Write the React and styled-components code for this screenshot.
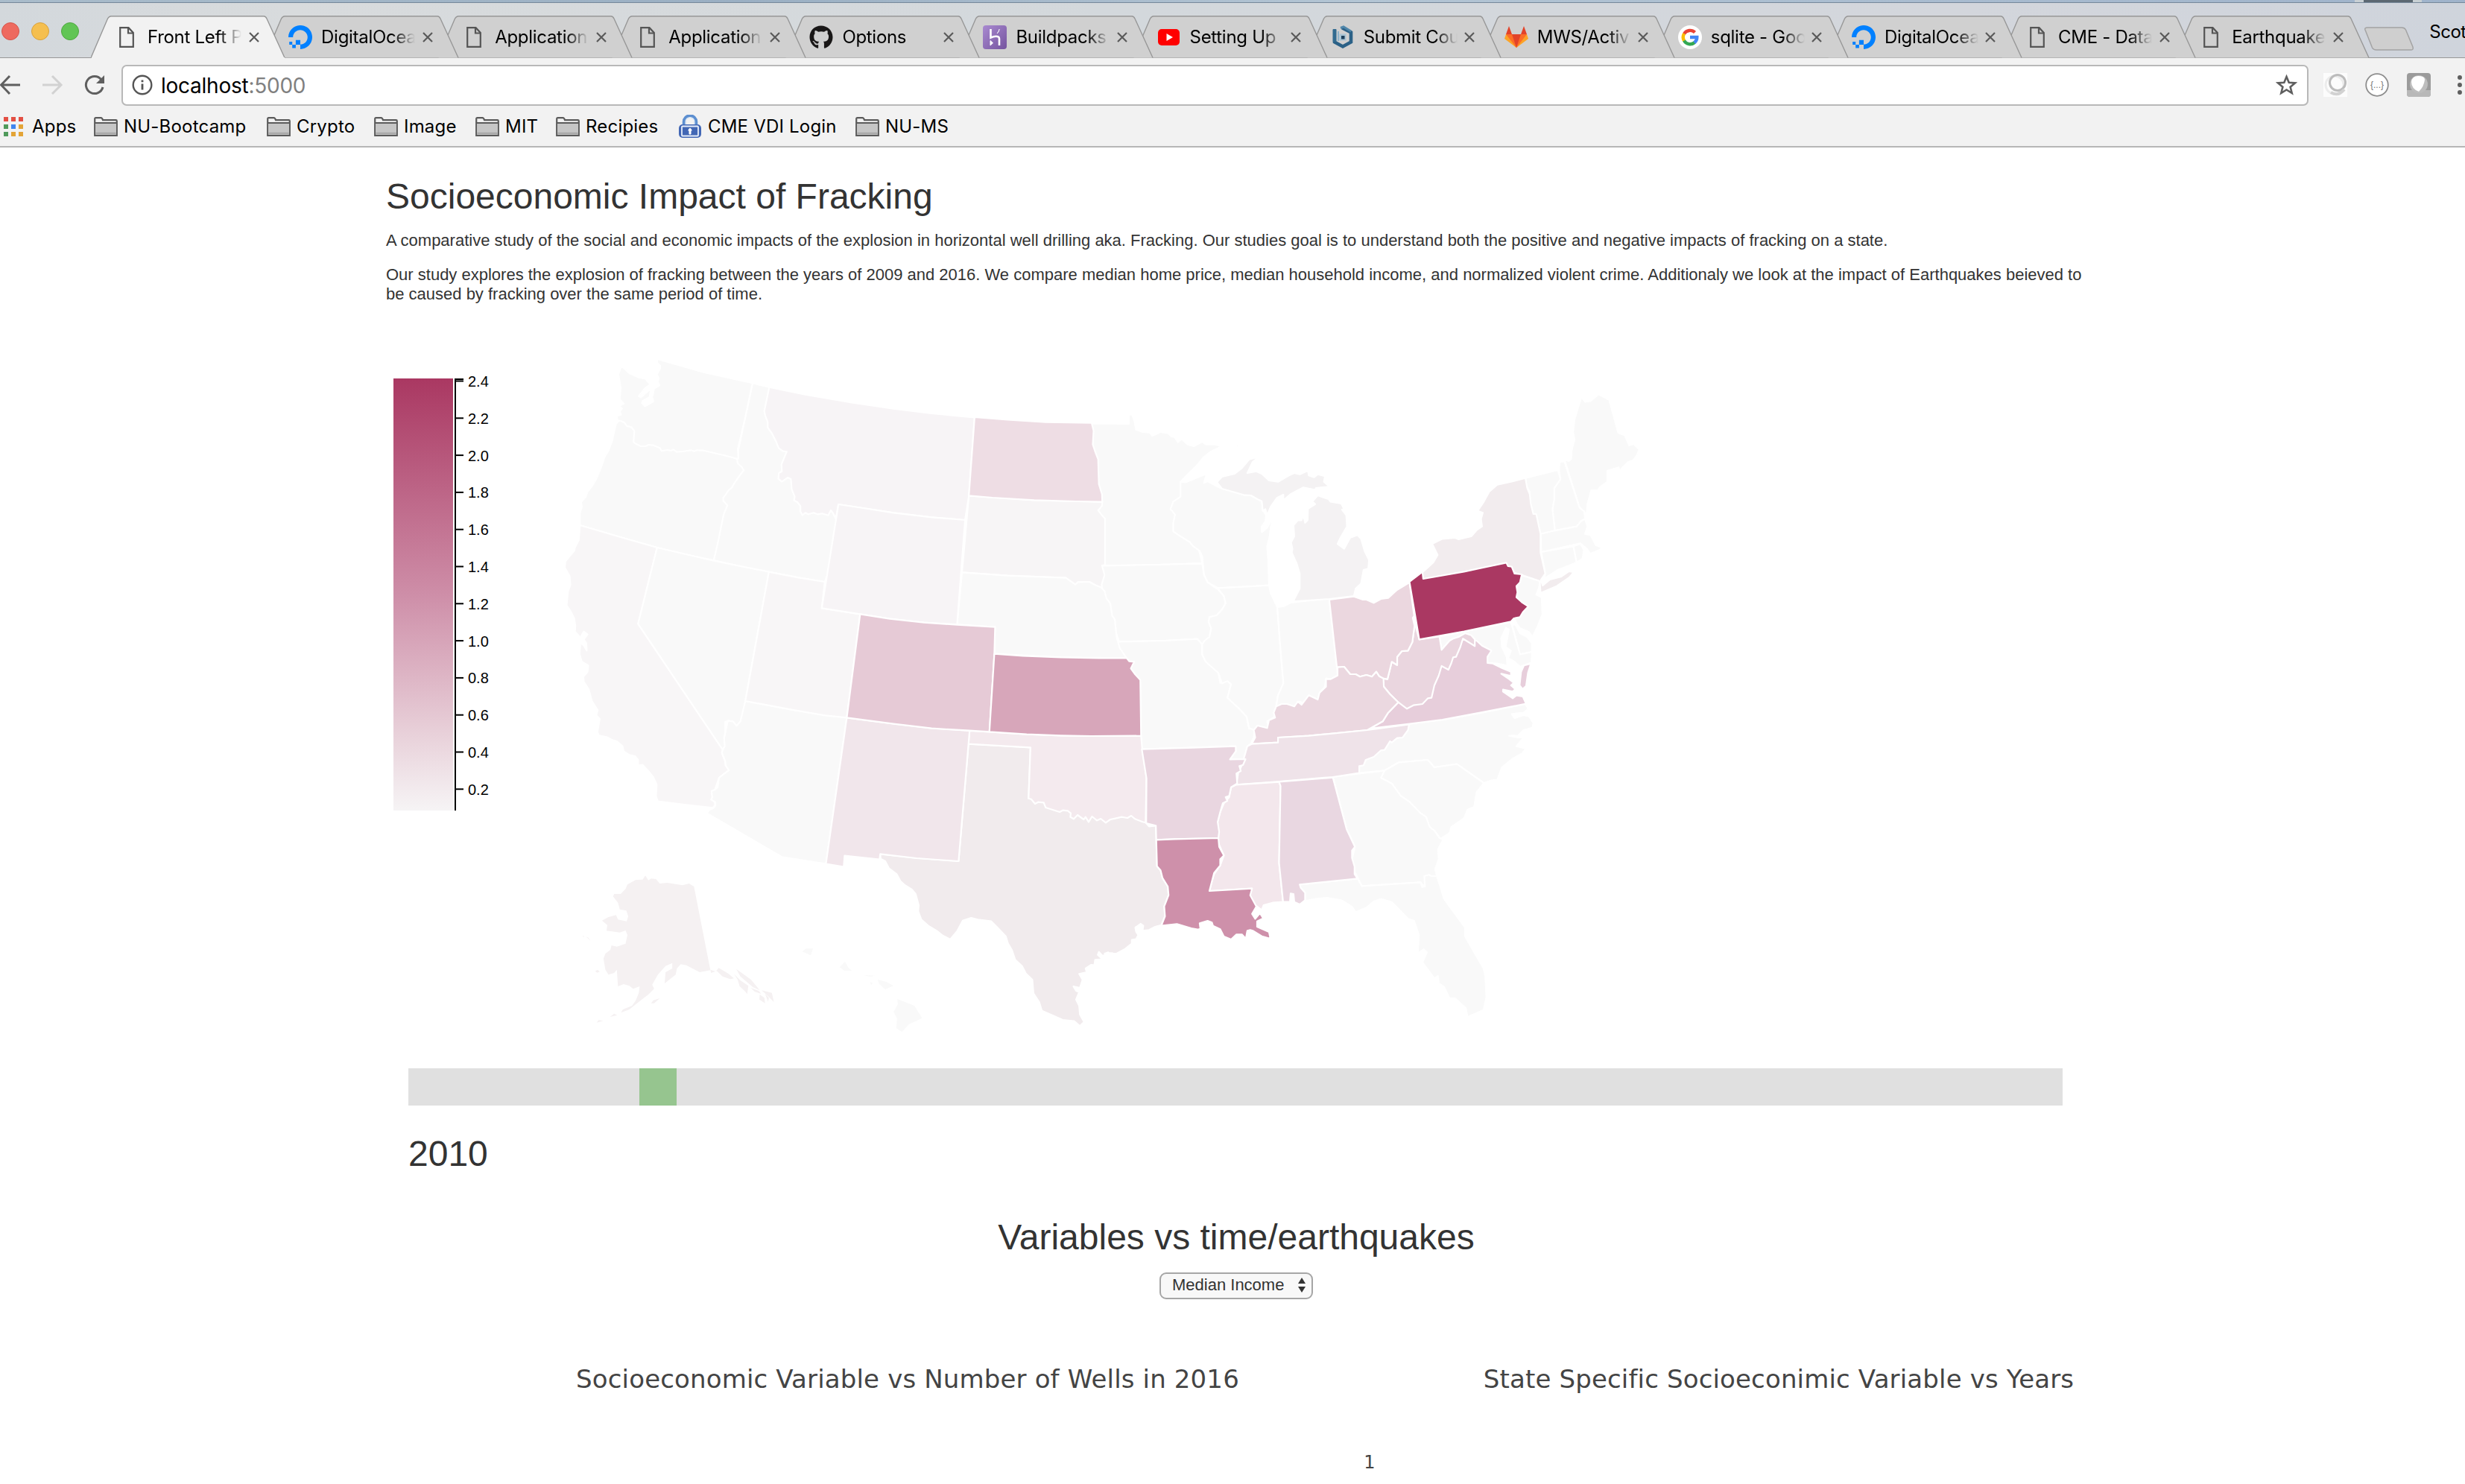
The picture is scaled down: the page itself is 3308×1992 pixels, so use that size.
import React from "react";
import styled, { createGlobalStyle } from "styled-components";
import { FaGithub } from "react-icons/fa";

const GlobalStyle = createGlobalStyle`
  * { box-sizing: border-box; }
  body { margin: 0; background: #fff; overflow: hidden; }
  svg { display: block; flex: none; }
`;

const UI_FONT = '"Inter", "Roboto", "Liberation Sans", sans-serif';
const PAGE_FONT = '"Liberation Sans", Arial, sans-serif';

/* ---------- browser window ---------- */

const Window = styled.div`
  width: 3308px;
  height: 1992px;
  overflow: hidden;
  display: flex;
  flex-direction: column;
  font-family: ${PAGE_FONT};
  color: #333;
`;
const DesktopEdge = styled.div`
  height: 4px;
  flex: none;
  background: linear-gradient(90deg, #a9bccb, #9aafc3 30%, #b3c5d4 55%, #9fb3cb);
  border-bottom: 1px solid #76889a;
  display: flex;
  justify-content: flex-end;
  padding-right: 58px;
`;
const DesktopItem = styled.div`
  width: 90px;
  height: 3px;
  background: #5c6872;
  border: solid #c8d0d4;
  border-width: 0 12px;
`;
const TabStrip = styled.div`
  height: 74px;
  flex: none;
  position: relative;
  background: linear-gradient(90deg, #d3d8dc, #d8dbdd 12%, #d3d8dc 45%, #d3d6dc 80%, #cfd4dc);
  border-bottom: 1px solid #979797;
  display: flex;
  padding-top: 17px;
`;
const Lights = styled.div`
  width: 147px;
  flex: none;
  display: flex;
  gap: 16px;
  padding: 9px 0 0 2px;
`;
const Light = styled.span`
  width: 24px;
  height: 24px;
  border-radius: 50%;
  background: ${(p) => p.$c};
  border: 1px solid ${(p) => p.$b};
`;
const Tab = styled.div`
  width: 233.1px;
  height: 57px;
  flex: none;
  position: relative;
  z-index: ${(p) => p.$z};
  display: flex;
  align-items: center;
  font: 24px/30px ${UI_FONT};
  color: #000;
`;
const TabShape = styled.svg`
  position: absolute;
  left: -25px;
  top: 0;
  z-index: -1;
`;
const TabIcon = styled.span`
  width: 46px;
  height: 34px;
  flex: none;
  display: flex;
  align-items: center;
  justify-content: center;
`;
const TabTitle = styled.span`
  width: 126px;
  margin-left: 5px;
  flex: none;
  overflow: hidden;
  white-space: nowrap;
  letter-spacing: -0.3px;
  mask-image: linear-gradient(90deg, #000 ${(p) => (p.$short ? 100 : 76)}%, transparent);
`;
const TabClose = styled.svg`
  margin-left: 9.500px;
`;
const NewTab = styled.svg`
  margin: 15px 0 0 -4px;
`;
const Profile = styled.span`
  margin: 7px 0 0 19px;
  font: 24px/30px ${UI_FONT};
  letter-spacing: -0.45px;
  color: #000;
  white-space: nowrap;
`;
const Toolbar = styled.div`
  height: 72px;
  flex: none;
  background: #f2f2f2;
  display: flex;
  align-items: center;
`;
const NavIcons = styled.svg`
  width: 163px;
`;
const Omnibox = styled.div`
  width: 2935px;
  height: 55px;
  border: 2px solid #b8b8b8;
  border-radius: 7px;
  background: #fff;
  display: flex;
  align-items: center;
  padding: 0 13px 0 12px;
  font: 28px/36px ${UI_FONT};
  color: #000;
`;
const Url = styled.span`
  flex: 1;
  margin: 2px 0 0 11px;
  letter-spacing: -0.25px;
  span { color: #808080; }
`;
const Extensions = styled.div`
  display: flex;
  align-items: center;
  gap: 24px;
  margin-left: 20px;
`;
const Menu = styled.svg`
  margin-left: 10px;
`;
const Bookmarks = styled.div`
  height: 48px;
  flex: none;
  background: #f2f2f2;
  border-bottom: 2px solid #b6b6b6;
  display: flex;
  padding-left: 5px;
`;
const Bookmark = styled.div`
  width: ${(p) => p.$w}px;
  flex: none;
  display: flex;
  align-items: center;
  gap: ${(p) => p.$gap || 8}px;
  padding-bottom: 6px;
  font: 24px/30px ${UI_FONT};
  letter-spacing: 0.2px;
  color: #000;
  white-space: nowrap;
`;

/* ---------- page ---------- */

const Page = styled.main`
  width: 2282px;
  margin-left: 518px;
  display: flex;
  flex-direction: column;
`;
const Heading = styled.h2`
  margin: ${(p) => p.$m};
  font: 400 48px/53px ${PAGE_FONT};
  text-align: ${(p) => p.$align || "left"};
`;
const Paragraph = styled.p`
  margin: 0 0 20px;
  font: 22px/26px ${PAGE_FONT};
`;
const MapRow = styled.div`
  display: flex;
  height: 930px;
  margin-top: 42px;
`;
const Slider = styled.div`
  width: 2220px;
  height: 50px;
  margin: 34px 0 0 30px;
  padding-left: 310px;
  background: #e0e0e0;
`;
const SliderHandle = styled.div`
  width: 50px;
  height: 50px;
  background: #96c58f;
`;
const SelectBox = styled.div`
  width: 206px;
  height: 36px;
  margin: 21px auto 0;
  border: 2px solid #a6a6a6;
  border-radius: 9px;
  background: #f8f8f8;
  display: flex;
  align-items: center;
  justify-content: space-between;
  padding: 0 7px 3px 15px;
  font: 22px/26px ${PAGE_FONT};
`;
const Plots = styled.div`
  display: flex;
  margin-top: 85px;
  font-family: "DejaVu Sans", Verdana, sans-serif;
  color: #444;
`;
const PlotTitle = styled.div`
  width: ${(p) => p.$w}px;
  flex: none;
  font-size: 34px;
  line-height: 44px;
  letter-spacing: 0.15px;
  text-align: center;
  white-space: nowrap;
`;
const AxisLabel = styled.div`
  margin: 75px 0 0 1311px;
  width: 18px;
  text-align: center;
  font: 24px/30px "DejaVu Sans", Verdana, sans-serif;
  color: #444;
`;

/* ---------- icons ---------- */

const FileIcon = () => (
  <svg width="20" height="28" viewBox="0 0 20 28" fill="none" stroke="#555" strokeWidth="2.2">
    <path d="M1.2 1.2H12.5L18.8 8V26.8H1.2Z" />
    <path d="M12 1.5V8.5H18.6" />
  </svg>
);
const DigitalOcean = () => (
  <svg width="32" height="32" viewBox="0 0 32 32" fill="#0080ff">
    <path d="M16 32V25.8C22.6 25.8 27.600 19.300 25.100 12.400C24.200 9.900 22.100 7.800 19.600 6.900C12.700 4.400 6.200 9.400 6.200 16H0C0 5.500 10.100 -2.700 21.100 .8C25.900 2.300 29.700 6.100 31.200 10.900C34.700 21.900 26.500 32 16 32Z" />
    <path d="M9.900 19.800H16V25.900H9.900ZM5.200 25.900H9.900V30.600H5.200ZM1.200 22H5.200V25.900H1.200Z" />
  </svg>
);
const Heroku = () => (
  <svg width="32" height="32" viewBox="0 0 32 32">
    <defs>
      <linearGradient id="heroku" x2="1" y2="1">
        <stop stopColor="#a98ad0" />
        <stop offset="1" stopColor="#75549f" />
      </linearGradient>
    </defs>
    <rect width="32" height="32" rx="4" fill="url(#heroku)" />
    <path d="M10.500 5V16.500C14 15 22 13 22 18V27" fill="none" stroke="#fff" strokeWidth="2.600" />
    <path d="M10 20.500L13.500 23.700L10 27ZM19 11Q21.800 8.500 22.200 5" fill="#fff" stroke="#fff" />
  </svg>
);
const YouTube = () => (
  <svg width="29" height="22" viewBox="0 0 29 22">
    <rect width="29" height="22" rx="5" fill="#f00" />
    <path d="M11.500 6L20 11L11.500 16Z" fill="#fff" />
  </svg>
);
const Hexagon = () => (
  <svg width="28" height="32" viewBox="0 0 28 32" fill="none">
    <path d="M3 6V22.500L14 28.500L25 22.500V9.500L13 3.200" stroke="#2b6187" strokeWidth="4.600" />
    <path d="M3 5V22" stroke="#326b90" strokeWidth="4.600" />
    <path d="M11 3.500L15 2L25 8" stroke="#4f86aa" strokeWidth="3" />
    <path d="M8 8V21" stroke="#8fb2c8" strokeWidth="2" />
    <rect x="9.500" y="11.500" width="9" height="9" fill="#a9c4d4" />
    <rect x="12" y="14" width="4.500" height="4.500" fill="#1d3f5c" />
  </svg>
);
const GitLab = () => (
  <svg width="32" height="29" viewBox="0 0 32 29">
    <path d="M0 17L2 11H30L32 17L16 29Z" fill="#fca326" />
    <path d="M16 29L2 11H30Z" fill="#fc6d26" />
    <path d="M16 29L10 11H22ZM2 11L6 0L10 11ZM30 11L26 0L22 11Z" fill="#e24329" />
  </svg>
);
const Google = () => (
  <svg width="32" height="32" viewBox="0 0 32 32" fill="none">
    <circle cx="16" cy="16" r="16" fill="#fff" />
    <g strokeWidth="4.400">
      <path d="M22.500 9.500A9.300 9.300 0 0 0 8 11.500" stroke="#ea4335" />
      <path d="M8.200 11.100A9.300 9.300 0 0 0 8.200 20.900" stroke="#fbbc05" />
      <path d="M8 20.500A9.300 9.300 0 0 0 22.200 23" stroke="#34a853" />
      <path d="M16 16H25.300A9.300 9.300 0 0 1 21.800 23.300" stroke="#4285f4" />
    </g>
  </svg>
);
const Folder = () => (
  <svg width="32" height="26" viewBox="0 0 32 26">
    <path d="M1.200 24.800V2.500Q1.200 1.200 2.500 1.200H9.500Q11 1.200 12 4.200H29.500Q30.800 4.200 30.800 5.500V24.800Z" fill="#f2f2f2" stroke="#5b5b5b" strokeWidth="2.200" />
    <rect x="2.400" y="9" width="27.200" height="14.700" fill="#c6c6c6" />
    <path d="M2 8H30" stroke="#5b5b5b" strokeWidth="2" />
    <path d="M2.400 22H29.600" stroke="#a9a9a9" strokeWidth="2.600" />
  </svg>
);
const Lock = () => (
  <svg width="32" height="32" viewBox="0 0 32 32">
    <path d="M8 15V9.500A8 8 0 0 1 24 9.500V15" fill="none" stroke="#5d8fd0" strokeWidth="4.500" />
    <path d="M10 14V9.500A6 6 0 0 1 22 9.500V14" fill="none" stroke="#dce9f7" strokeWidth="1.200" />
    <rect x="1" y="13" width="30" height="18" rx="5" fill="#4267b5" />
    <rect x="5" y="15.500" width="22" height="13" rx="1" fill="none" stroke="#e8effa" strokeWidth="1.800" />
    <path d="M16 18.500A2.200 2.200 0 0 1 17 22.500V26H15V22.500A2.200 2.200 0 0 1 16 18.500Z" fill="#fff" stroke="#fff" />
  </svg>
);
const AppsGrid = () => {
  const colors = ["#e34f43", "#e34f43", "#e34f43", "#4f9a5b", "#3f85ee", "#e3a436", "#4f9a5b", "#e3a436", "#e3a436"];
  return (
    <svg width="26" height="26" viewBox="0 0 26 26">
      {colors.map((c, i) => (
        <rect key={i} x={(i % 3) * 10} y={Math.floor(i / 3) * 10} width="6" height="6" fill={c} />
      ))}
    </svg>
  );
};

const TABS = [
  [FileIcon, "Front Left P"],
  [DigitalOcean, "DigitalOcea"],
  [FileIcon, "Application"],
  [FileIcon, "Application"],
  [() => <FaGithub size={32} color="#191717" />, "Options"],
  [Heroku, "Buildpacks"],
  [YouTube, "Setting Up"],
  [Hexagon, "Submit Cou"],
  [GitLab, "MWS/Activ"],
  [Google, "sqlite - Goo"],
  [DigitalOcean, "DigitalOcea"],
  [FileIcon, "CME - Data"],
  [FileIcon, "Earthquake"],
];

const BOOKMARKS = [
  [AppsGrid, "Apps", 121, 12],
  [Folder, "NU-Bootcamp", 232],
  [Folder, "Crypto", 144],
  [Folder, "Image", 136],
  [Folder, "MIT", 108],
  [Folder, "Recipies", 164],
  [Lock, "CME VDI Login", 238],
  [Folder, "NU-MS", 130],
];

/* ---------- map ---------- */

// The outlines are digitised on four sheets; each has its origin and scale.
const SHEETS = {
  A: [740, 470, 1.96],
  B: [740, 900, 1.96],
  C: [1480, 520, 2.0632],
  D: [1480, 940, 2.0632],
};

// Turns "A x y x y B x y" into path data; "/" starts a new polygon.
function outline(text) {
  let sheet = SHEETS.A;
  return text
    .split("/")
    .map((part) => {
      const points = [];
      const tokens = part.trim().split(/[\s,]+/);
      for (let i = 0; i < tokens.length; ) {
        if (SHEETS[tokens[i]]) {
          sheet = SHEETS[tokens[i]];
          i += 1;
        } else {
          const x = sheet[0] + tokens[i] / sheet[2];
          const y = sheet[1] + tokens[i + 1] / 3;
          points.push(`${x.toFixed(1)} ${y.toFixed(1)}`);
          i += 2;
        }
      }
      return `M${points.join("L")}Z`;
    })
    .join("");
}

const NONE = "#f9f9f9";

// Later states are painted over earlier ones.
const STATES = [
  ["ID", NONE, "A 529,133 573,149 640,400 760,640 780,700 719,933 650,916 572,893 500,873 427,846 400,600 400,437 488,437 492,430 492,400"],
  ["OR", NONE, "A 170,297 166,320 160,365 150,405 140,430 130,475 118,518 108,545 95,570 90,592 78,612 80,632 75,655 75,705 180,752 278,795 350,822 427,846 440,760 453,662 463,625 452,607 452,595 467,562 475,553 480,538 495,505 506,484 500,470 490,455 488,437 400,380 230,300 200,288 180,280"],
  ["WA", NONE, "A 278,36 400,89 529,133 510,270 490,400 492,437 488,437 455,424 400,404 383,403 375,407 367,403 345,408 330,410 320,400 315,405 305,402 290,406 285,394 268,383 255,381 248,387 235,387 222,377 216,371 218,325 210,310 198,305 192,292 182,285 174,283 172,265 183,260 180,245 186,235 178,225 190,215 180,198 182,150 176,97 184,64 205,93 230,110 247,115 260,138 245,155 230,185 235,190 262,155 258,190 240,205 238,212 246,226 268,207 265,190 270,155 284,142 280,128 282,112 277,97 286,75 286,62 278,50"],
  ["CA", "#f8f6f7", "A 75,705 180,752 278,795 228,1102 B 450,318 450,340 457,365 458,382 467,402 455,415 441,432 430,480 421,495 431,540 425,553 350,540 280,527 275,507 277,460 268,430 255,405 240,380 228,382 228,360 220,345 205,340 190,325 187,305 172,285 160,280 145,268 125,262 121,248 127,195 118,180 122,160 107,125 98,75 85,45 84,25 95,5 A 97,1270 80,1255 74,1225 76,1180 84,1187 93,1210 92,1180 85,1165 95,1145 85,1133 76,1157 62,1133 63,1110 60,1080 50,1050 40,1028 44,970 50,945 48,910 35,875 37,850 60,808 62,795 72,765"],
  ["AZ", NONE, "B 510,123 640,160 777,190 722,779 606,751 409,575 415,562 425,555 431,545 431,530 420,520 423,510 421,485 430,480 437,470 441,432 455,415 467,402 458,382 457,365 448,330 455,305 454,275 470,160"],
  ["NV", NONE, "A 278,795 427,848 572,893 B 510,123 497,205 487,223 478,205 465,202 457,207 457,250 454,270 456,305 450,318 A 228,1102"],
  ["UT", "#f8f6f7", "A 572,893 650,916 719,933 711,1039 812,1063 B 777,190 720,181 640,160 510,123"],
  ["MN", NONE, "A 1410,295 1518,297 C 72,147 72,108 82,112 88,140 92,170 110,180 130,182 137,195 160,180 182,185 190,198 198,200 208,220 218,208 235,230 252,237 275,218 285,230 310,230 330,237 300,258 280,280 260,315 235,350 215,380 240,500 275,708 150,714 0,718 A 1420,860"],
  ["WI", NONE, "C 215,380 230,382 287,348 280,385 290,378 318,400 330,408 380,425 390,433 410,435 428,450 440,458 443,495 452,515 450,540 440,560 440,583 455,565 463,545 475,520 465,560 462,600 455,640 458,700 460,797 400,802 318,808 290,785 280,755 275,680 268,658 250,640 240,622 215,600 195,580 195,545 200,512 187,490 195,460 215,440"],
  ["IA", NONE, "A 1448,867 C 0,718 150,714 275,709 280,755 290,785 305,800 318,812 335,840 340,870 330,895 315,918 295,925 293,945 300,970 295,1005 282,1020 275,1035 262,1013 170,1020 45,1024 20,920 A 1445,945"],
  ["MO", NONE, "C 45,1024 170,1020 262,1013 275,1035 275,1075 285,1105 320,1150 325,1190 345,1183 355,1195 345,1250 375,1290 398,1325 405,1375 D 405,112 420,120 418,150 410,175 400,185 392,237 352,238 368,205 362,185 250,190 108,197 90,140 C 90,1178 20,1150 38,1050"],
  ["IL", NONE, "C 318,808 400,802 460,797 465,830 475,860 483,885 490,1020 495,1110 500,1190 490,1230 485,1240 480,1285 473,1310 477,1325 455,1345 458,1370 D 455,112 430,102 420,120 405,112 C 398,1325 375,1290 345,1250 355,1195 345,1183 330,1192 320,1150 285,1105 275,1075 275,1035 282,1020 295,1005 300,970 293,945 295,925 315,918 330,895 340,870 335,840"],
  ["IN", NONE, "C 483,885 500,882 520,867 627,850 635,960 648,1120 650,1160 630,1175 618,1172 615,1205 600,1230 595,1257 570,1240 560,1275 545,1265 530,1285 510,1275 480,1285 485,1240 500,1190 495,1110 490,1020"],
  ["MI", "#f4f2f3", "C 527,862 545,810 545,750 537,710 523,665 525,650 521,625 530,600 528,555 540,535 550,535 555,512 560,545 567,535 568,488 588,470 580,460 595,435 625,450 630,460 660,468 668,490 662,492 674,515 676,560 658,605 650,630 668,650 685,605 705,595 715,610 725,660 737,695 735,730 722,735 715,790 700,810 695,840 627,852 / 316,382 330,360 365,348 385,325 405,290 432,280 415,300 400,345 425,338 440,348 460,375 485,380 515,355 530,345 545,350 568,335 570,355 585,362 595,350 615,358 612,380 628,400 590,405 588,413 555,403 520,430 500,455 500,432 482,445 465,480 455,515 450,490 443,498 440,458 428,450 410,435 390,433 330,408 / 362,240 388,217 375,238"],
  ["ME", NONE, "C 1278,290 1290,297 1297,288 1298,255 1306,210 1302,180 1306,130 1325,38 1335,58 1350,55 1372,28 1402,50 1427,183 1445,193 1457,233 1470,228 1485,250 1478,275 1467,295 1455,300 1440,320 1432,338 1428,322 1410,330 1397,335 1397,380 1378,400 1370,415 1352,415 1342,470 1340,500 1333,520 1333,500 1320,485"],
  ["NH", NONE, "C 1265,300 1278,298 1320,485 1333,500 1335,530 1325,537 1312,560 1250,577 1245,490 1250,405 1267,370 1263,333"],
  ["VT", NONE, "C 1170,365 1260,333 1267,370 1250,405 1250,450 1245,490 1252,577 1212,590 1200,515 1192,510 1182,460 1182,420 1172,395"],
  ["MA", NONE, "C 1212,590 1250,577 1312,560 1325,537 1335,530 1342,560 1335,590 1350,595 1365,635 1380,645 1400,628 1375,655 1350,670 1340,650 1322,628 1214,663"],
  ["CT", NONE, "C 1214,663 1303,640 1312,705 1260,735 1222,770 1225,750"],
  ["RI", NONE, "C 1303,640 1322,630 1332,655 1328,690 1312,705"],
  ["NJ", NONE, "C 1155,755 1210,780 1208,805 1200,835 1215,845 1217,915 1203,965 1190,1005 1180,985 1155,970 1145,950 1140,930 1155,890 1140,845"],
  ["NY", "#f2ecee", "C 885,775 885,745 915,705 927,675 912,630 940,610 975,606 985,612 1020,600 1035,575 1050,560 1047,530 1052,505 1038,497 1055,460 1070,420 1092,392 1130,380 1170,365 1175,405 1182,430 1185,470 1192,510 1200,510 1212,590 1212,665 1225,750 1213,775 1218,798 1238,774 1268,763 1290,741 1304,744 1292,765 1257,800 1212,828 1210,780 1160,755 1100,730"],
  ["DE", NONE, "C 1133,955 1142,955 1155,990 1175,1005 1188,1030 1188,1065 1155,1075"],
  ["MD", NONE, "C 932,1003 1130,945 1155,1075 1188,1065 1187,1108 1155,1125 1140,1105 1122,1090 1130,1060 1115,1045 1120,1010 1124,975 1116,968 1103,1010 1105,1045 1118,1085 1120,1120 1090,1112 1068,1110 1020,1000 985,1005 960,1020 938,1057"],
  ["NC", NONE, "D 780,105 940,79 1050,50 1170,15 1178,35 1165,50 1132,55 1140,72 1165,60 1180,65 1192,90 1190,110 1165,120 1150,142 1125,143 1150,150 1165,150 1145,185 1172,195 1160,215 1135,235 1105,270 1092,320 1075,323 1055,333 980,257 918,270 900,240 820,250 780,283 710,293 700,200"],
  ["SC", NONE, "D 780,283 820,250 900,240 918,270 980,257 1055,333 1035,370 1028,430 1010,440 1000,475 965,510 960,535 935,558 918,525 905,510 895,470 880,455 850,410 825,385 800,335 770,312"],
  ["GA", NONE, "D 637,309 710,295 780,283 770,312 800,335 825,385 850,410 880,455 895,470 905,510 918,525 932,555 942,560 928,600 930,640 920,680 925,708 900,715 888,750 880,733 717,748 697,690 690,640 698,590 675,520"],
  ["FL", NONE, "D 545,742 705,718 717,748 880,733 884,752 892,750 890,708 903,703 910,708 925,708 945,800 1003,915 1003,950 1030,1020 1054,1080 1059,1110 1062,1195 1054,1247 1010,1276 1005,1240 975,1200 960,1200 945,1155 930,1140 928,1110 918,1120 885,1055 897,1015 888,1003 872,1020 875,945 862,888 845,880 815,835 800,812 770,800 750,810 730,835 700,853 690,832 660,805 620,795 590,800 560,808 560,775 545,755"],
  ["VA", "#e7cedb", "C 735,1378 745,1373 850,1355 940,1338 1050,1308 1172,1274 1163,1245 1145,1240 1135,1252 1108,1225 1108,1217 1135,1225 1142,1215 1130,1200 1138,1190 1125,1175 1103,1153 1130,1162 1130,1145 1105,1130 1080,1112 1065,1110 1065,1085 1076,1060 1050,1040 1035,1020 997,1015 900,1150 818,1268 790,1310 775,1345 / 1185,1113 1177,1150 1172,1202 1162,1215 1154,1200 1158,1145 1166,1120"],
  ["WV", "#ead6df", "C 858,920 876,1015 932,1003 938,1057 960,1020 970,1012 985,1005 1003,990 1020,998 1030,1015 1030,1042 997,1012 990,1045 978,1085 970,1087 965,1110 957,1137 938,1122 930,1160 918,1200 910,1250 900,1252 885,1275 860,1280 842,1294 818,1268 795,1235 778,1205 775,1172 788,1175 795,1135 800,1105 815,1118 815,1085 828,1062 845,1060 857,1025 863,960"],
  ["OH", "#ebd7df", "C 627,855 695,842 720,855 730,855 750,868 770,852 790,848 815,815 849,785 862,920 858,928 863,960 857,1025 845,1060 828,1062 815,1085 815,1118 800,1105 795,1135 788,1175 775,1172 765,1163 757,1145 745,1165 730,1158 712,1165 700,1155 685,1155 668,1125 648,1127"],
  ["KY", "#ebd8e0", "C 650,1127 668,1125 685,1155 700,1155 712,1165 730,1158 745,1165 757,1145 765,1163 777,1172 778,1205 795,1235 818,1268 790,1310 775,1345 735,1378 D 732,120 570,143 485,150 485,170 412,176 422,150 418,120 428,102 455,112 460,80 477,70 473,50 C 480,1285 495,1275 510,1275 530,1285 540,1265 550,1278 570,1240 595,1257 600,1230 618,1205 618,1175 630,1175 650,1160"],
  ["PA", "#aa3862", "C 885,743 887,771 1000,742 1117,706 1122,720 1132,722 1140,750 1160,753 1155,785 1145,800 1148,825 1145,845 1160,865 1178,882 1163,905 1155,925 1138,930 1130,943 1000,983 876,1015 849,783"],
  ["TN", "#efe3e9", "D 412,176 485,170 485,150 570,143 732,120 848,97 845,120 830,150 815,152 800,170 795,165 780,200 770,202 750,228 728,240 722,262 710,265 710,293 637,309 488,327 370,340 375,290 385,262 400,185"],
  ["MS", "#f3e7ec", "D 370,340 488,329 492,345 488,655 499,812 470,815 445,825 440,845 400,800 413,758 295,768 300,740 308,700 325,665 335,625 320,575 318,490 325,450 335,415 350,390 355,350"],
  ["AL", "#e9d7e1", "D 488,328 637,311 675,520 698,590 690,605 690,635 697,670 697,700 705,718 545,742 548,755 560,775 560,805 545,822 530,812 528,780 520,778 518,812 499,812 488,655 492,345"],
  ["TX", "#f1ebed", "B 1097,296 1260,310 1255,515 1400,560 1540,570 D 120,495 128,508 147,505 148,562 150,668 160,685 165,715 180,750 182,785 170,830 172,870 162,905 145,912 128,925 110,928 112,908 105,900 90,915 92,932 98,945 92,962 80,965 80,980 60,1003 35,1022 25,1018 20,1025 15,1015 5,1020 B 1485,1140 1465,1137 1450,1150 1440,1133 1437,1145 1450,1163 1430,1165 1428,1187 1420,1185 1405,1200 1408,1215 1388,1222 1397,1245 1390,1278 1373,1272 1380,1290 1388,1295 1380,1325 1388,1350 1390,1385 1401,1415 1390,1432 1375,1412 1345,1407 1315,1387 1290,1370 1283,1335 1268,1300 1265,1245 1248,1220 1238,1190 1220,1165 1211,1125 1201,1100 1195,1070 1173,1035 1157,1010 1125,1004 1104,996 1082,1007 1067,1050 1049,1083 1030,1068 1015,1050 993,1030 973,1003 965,970 966,945 958,900 948,882 930,865 918,848 908,820 888,797 878,768 866,758 865,739 960,755 1071,768"],
  ["OK", "#f4eaee", "B 1100,243 1152,247 1250,257 1340,262 1420,264 1551,263 1554,318 1565,430 1563,613 1555,610 1535,598 1525,585 1515,594 1500,590 1485,595 1470,600 1458,613 1445,597 1435,604 1422,588 1413,610 1405,590 1400,600 1384,582 1374,598 1365,590 1366,575 1358,565 1345,563 1337,570 1320,562 1300,552 1295,532 1280,530 1272,537 1262,518 1255,515 1260,310 1180,303 1097,296"],
  ["NM", "#f1e6eb", "B 777,190 900,214 1000,232 1100,243 1097,296 1071,768 960,756 865,739 863,761 771,746 769,791 722,779"],
  ["SD", "#f7f5f6", "A 1098,586 1270,604 1449,611 1448,628 1438,645 1448,665 1456,678 1456,865 1448,867 1455,905 1447,945 1450,965 1430,946 1415,933 1385,934 1378,944 1353,917 1200,908 1080,895"],
  ["NE", NONE, "A 1080,895 1200,908 1353,917 1378,944 1385,934 1415,933 1430,946 1445,955 1455,970 1460,1000 1470,1020 1475,1070 1482,1085 1487,1160 1495,1200 1513,1240 1340,1237 1165,1223 1167,1115 1067,1105"],
  ["MT", "#f7f4f6", "A 573,149 665,178 790,211 900,236 1000,255 1113,271 1098,588 1088,684 1000,673 900,655 820,636 755,621 748,678 740,655 735,645 728,665 712,658 700,661 690,655 675,661 668,655 660,664 655,650 655,628 647,612 638,605 640,590 632,560 630,520 622,513 606,530 597,518 598,495 606,488 605,460 613,430 619,409 609,407 598,395 590,365 580,335 569,312 569,290 562,262 560,245"],
  ["WY", "#f7f4f6", "A 755,621 820,636 900,655 1000,673 1088,684 1067,1105 980,1097 890,1082 812,1063 711,1039"],
  ["ND", "#eedde4", "A 1113,270 1200,280 1300,290 1421,293 1426,325 1424,380 1430,408 1438,440 1440,540 1448,580 1449,611 1380,609 1270,604 1160,594 1098,586"],
  ["CO", "#e6cad6", "A 812,1063 890,1082 980,1097 1067,1106 1167,1115 1165,1223 B 1152,247 1100,242 1000,233 900,215 777,190"],
  ["KS", "#d7a6ba", "A 1165,1223 1240,1231 1340,1237 1440,1240 1513,1240 1520,1253 1533,1255 1524,1282 1535,1305 1549,1328 B 1551,263 1420,264 1340,262 1250,257 1152,247"],
  ["AR", "#e9d6e0", "D 108,197 250,191 368,185 368,205 352,238 395,237 388,260 378,265 382,285 370,295 372,335 355,350 350,385 340,390 345,405 332,415 325,450 318,490 322,530 320,555 200,559 148,562 147,505 120,495 121,315"],
  ["LA", "#ce90aa", "D 148,562 200,559 320,555 322,590 335,625 325,640 325,665 308,695 300,740 295,768 413,758 408,785 425,830 413,860 422,880 435,857 444,878 427,890 427,912 460,933 464,960 440,950 415,928 408,925 400,928 396,960 385,943 370,943 355,963 335,951 325,922 305,908 302,895 290,888 268,898 270,920 262,923 245,918 205,901 162,908 172,870 170,830 182,785 180,750 165,715 160,685 150,668"],
  ["AK", "#f5f1f2", "B 247,826 255,845 262,838 275,840 285,858 305,855 345,865 362,858 375,870 418,1207 390,1215 375,1203 355,1187 340,1183 330,1200 327,1225 298,1260 300,1215 318,1200 318,1178 300,1190 280,1225 265,1265 270,1282 255,1305 235,1328 205,1365 183,1378 188,1365 212,1350 222,1328 230,1298 232,1272 215,1282 205,1270 190,1263 175,1272 172,1205 165,1218 150,1225 142,1205 137,1160 142,1140 155,1125 158,1107 172,1112 195,1100 200,1065 195,1047 180,1055 145,1048 147,1025 133,1007 150,993 170,985 175,1003 198,1010 202,990 197,967 180,962 175,935 162,910 165,900 182,900 195,880 200,862 222,843 240,842 / 418,1205 432,1212 440,1198 465,1220 480,1240 470,1243 450,1232 435,1210 420,1218 / 486,1202 500,1217 525,1245 548,1288 530,1275 497,1232 / 480,1222 497,1248 518,1270 515,1303 508,1290 495,1272 490,1245 / 524,1278 545,1290 552,1302 535,1294 / 553,1288 580,1298 585,1335 570,1312 / 548,1305 560,1318 562,1340 547,1325 / 562,1302 572,1318 570,1334 / 262,1340 268,1328 285,1320 270,1340 / 154,1395 165,1382 173,1388 / 119,1418 124,1408 136,1411 / 115,1210 122,1206 127,1213 120,1217 / 82,1068 87,1071 84,1073 / 91,1072 97,1076 103,1088"],
  ["HI", "#f9f9f9", "B 660,1132 670,1120 688,1120 682,1147 / 772,1173 780,1195 790,1210 770,1208 758,1195 / 820,1227 852,1229 838,1233 / 858,1245 880,1253 900,1270 878,1284 862,1262 / 838,1255 846,1258 841,1267 / 910,1323 955,1350 975,1400 940,1425 922,1455 907,1440 909,1402 900,1375 911,1345"],
];

const TICKS = ["2.4", "2.2", "2.0", "1.8", "1.6", "1.4", "1.2", "1.0", "0.8", "0.6", "0.4", "0.2"];

const Legend = () => (
  <svg width="222" height="930" viewBox="518 470 222 930">
    <defs>
      <linearGradient id="scale" x2="0" y2="1">
        <stop stopColor="#aa3862" />
        <stop offset="0.5" stopColor="#ce8ea8" />
        <stop offset="0.82" stopColor="#e8d0d9" />
        <stop offset="1" stopColor="#f6f4f5" />
      </linearGradient>
    </defs>
    <rect x="528" y="508" width="80" height="580" fill="url(#scale)" />
    <path d="M622 509H611V1088" fill="none" stroke="#000" strokeWidth="2" />
    {TICKS.map((t, i) => (
      <g key={t}>
        <path d={`M611 ${511.5 + i * 49.8}h11`} stroke="#000" strokeWidth="2" />
        <text x="628" y={519 + i * 49.8} fontSize="20" fontFamily="Liberation Sans, Arial, sans-serif" fill="#000">
          {t}
        </text>
      </g>
    ))}
  </svg>
);

const StateMap = () => (
  <svg width="1500" height="930" viewBox="740 470 1500 930" stroke="#fff" strokeWidth="2.2" strokeLinejoin="round">
    {STATES.map(([id, fill, text]) => (
      <path key={id} d={outline(text)} fill={fill} strokeWidth={id === "AK" || id === "HI" ? 0 : undefined} />
    ))}
  </svg>
);

export default function App() {
  return (
    <Window>
      <GlobalStyle />
      <DesktopEdge>
        <DesktopItem />
      </DesktopEdge>
      <TabStrip>
        <Lights>
          <Light $c="#ee6a5f" $b="#d5554b" />
          <Light $c="#f5bf4f" $b="#d8a13c" />
          <Light $c="#61c554" $b="#4fa73f" />
        </Lights>
        {TABS.map(([Icon, title], i) => (
          <Tab key={i} $z={20 - i}>
            <TabShape width="262" height="58" viewBox="0 0 262 58">
              <path
                d="M0 56.500L22.500 4Q24.500 .7 27 .7H232Q234.500 .7 236 4L260 56.500"
                fill={i === 0 ? "#f2f2f2" : "#d0d0d0"}
                stroke="#979797"
                strokeWidth="1.400"
              />
              {i === 0 && <path d="M1 57H260" stroke="#f2f2f2" strokeWidth="2" />}
            </TabShape>
            <TabIcon>
              <Icon />
            </TabIcon>
            <TabTitle $short={title === "Options"}>{title}</TabTitle>
            <TabClose width="14" height="14" viewBox="0 0 14 14" stroke="#5a5a5a" strokeWidth="2.200">
              <path d="M1 1L13 13M13 1L1 13" />
            </TabClose>
          </Tab>
        ))}
        <NewTab width="68" height="32" viewBox="0 0 68 32">
          <path d="M1 4Q0 1 4 1H50Q54 1 55.500 4L65 27Q66 31 63 31H16Q12 31 10.500 28Z" fill="#cfcfcf" stroke="#a3a3a3" strokeWidth="1.500" />
        </NewTab>
        <Profile>Scot</Profile>
      </TabStrip>
      <Toolbar>
        <NavIcons height="40" viewBox="0 0 163 40" fill="none" strokeWidth="3">
          <path d="M27 20H2M13 8L1.500 20L13 32" stroke="#5f5f5f" />
          <path d="M57 20H82M70 8L82 20L70 32" stroke="#d2d2d2" />
          <path d="M136 13A11.500 11.500 0 1 0 138 23" stroke="#5f5f5f" />
          <path d="M140 7V18H129Z" fill="#5f5f5f" />
        </NavIcons>
        <Omnibox>
          <svg width="28" height="28" viewBox="0 0 28 28" fill="none" stroke="#555" strokeWidth="2.400">
            <circle cx="14" cy="14" r="12.300" />
            <path d="M14 12.500V20.500M14 7.500V10.300" strokeWidth="2.800" />
          </svg>
          <Url>
            localhost<span>:5000</span>
          </Url>
          <svg width="29" height="28" viewBox="0 0 29 28" fill="none" stroke="#5f5f5f" strokeWidth="2.600">
            <path d="M14.500 3L17.700 10.800L26 11.400L19.600 16.800L21.700 25L14.500 20.500L7.300 25L9.400 16.800L3 11.400L11.300 10.800Z" />
          </svg>
        </Omnibox>
        <Extensions>
          <svg width="32" height="32" viewBox="0 0 32 32" fill="none">
            <rect width="32" height="32" fill="#fcfcfc" />
            <circle cx="15" cy="16" r="12" stroke="#ececec" strokeWidth="3" />
            <circle cx="19" cy="13" r="10.500" stroke="#bcbcbc" strokeWidth="3" />
            <path d="M10 26Q20 32 28 22" stroke="#d2d2d2" strokeWidth="4" />
          </svg>
          <svg width="32" height="32" viewBox="0 0 32 32">
            <circle cx="16" cy="16" r="14.800" fill="#fff" stroke="#8d8d8d" strokeWidth="1.800" />
            <text x="16" y="20" fontSize="12" textAnchor="middle" fontFamily="Liberation Sans, sans-serif" fill="#777">{"{...}"}</text>
          </svg>
          <svg width="32" height="32" viewBox="0 0 32 32">
            <rect width="32" height="32" rx="4" fill="#9b9b9b" />
            <path d="M0 23H32V28Q32 32 28 32H4Q0 32 0 28Z" fill="#b8b8b8" />
            <circle cx="16" cy="15" r="12" fill="#bdbdbd" />
            <path d="M6 12Q7 4 15 4Q24 4 24 9Q23 18 16 25Q6 21 6 12Z" fill="#fff" />
          </svg>
        </Extensions>
        <Menu width="32" height="30" viewBox="0 0 32 30" fill="#5f5f5f">
          <circle cx="29" cy="5" r="3" />
          <circle cx="29" cy="15" r="3" />
          <circle cx="29" cy="25" r="3" />
        </Menu>
      </Toolbar>
      <Bookmarks>
        {BOOKMARKS.map(([Icon, label, w, gap]) => (
          <Bookmark key={label} $w={w} $gap={gap}>
            <Icon />
            {label}
          </Bookmark>
        ))}
      </Bookmarks>
      <Page>
        <Heading $m="39px 0 20px">Socioeconomic Impact of Fracking</Heading>
        <Paragraph>
          A comparative study of the social and economic impacts of the explosion in horizontal well drilling aka. Fracking. Our studies goal is to understand both the positive and negative impacts of fracking on a state.
        </Paragraph>
        <Paragraph>
          Our study explores the explosion of fracking between the years of 2009 and 2016. We compare median home price, median household income, and normalized violent crime. Additionaly we look at the impact of Earthquakes beieved to be caused by fracking over the same period of time.
        </Paragraph>
        <MapRow>
          <Legend />
          <StateMap />
        </MapRow>
        <Slider>
          <SliderHandle />
        </Slider>
        <Heading $m="38px 0 0 30px">2010</Heading>
        <Heading $m="59px 0 0" $align="center">
          Variables vs time/earthquakes
        </Heading>
        <SelectBox>
          Median Income
          <svg width="12" height="22" viewBox="0 0 12 22" fill="#333">
            <path d="M6 1L11 9H1ZM6 21L1 13H11Z" />
          </svg>
        </SelectBox>
        <Plots>
          <PlotTitle $w={1400}>Socioeconomic Variable vs Number of Wells in 2016</PlotTitle>
          <PlotTitle $w={938}>State Specific Socioeconimic Variable vs Years</PlotTitle>
        </Plots>
        <AxisLabel>1</AxisLabel>
      </Page>
    </Window>
  );
}
